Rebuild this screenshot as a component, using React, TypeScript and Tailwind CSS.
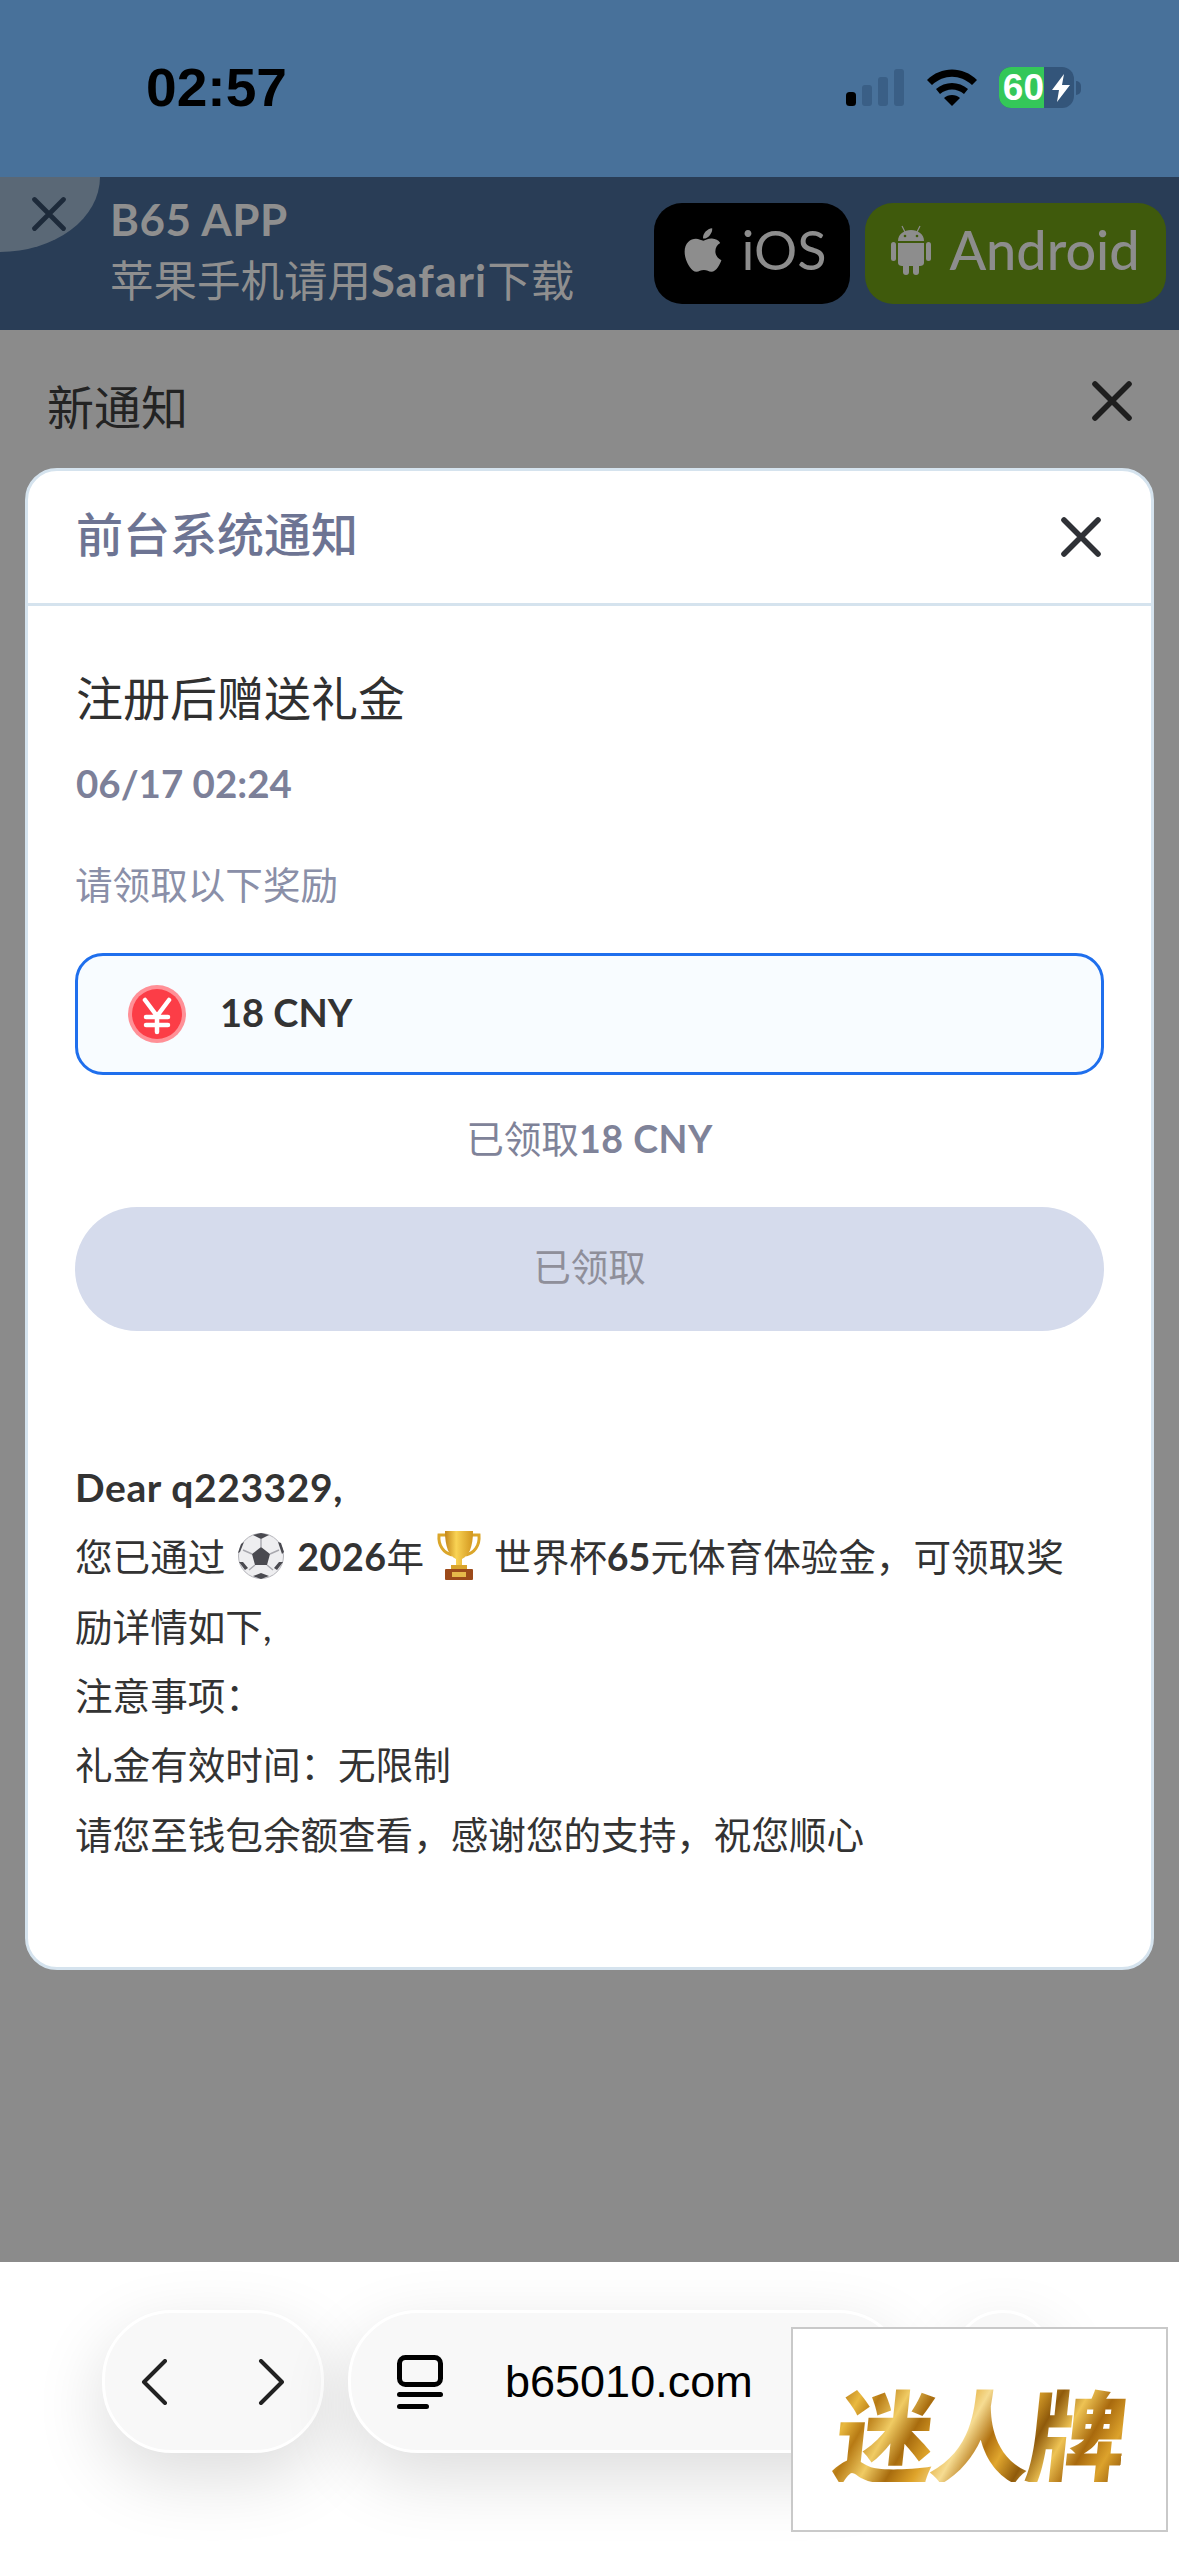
import React from 'react';
import { FaApple } from 'react-icons/fa';

const cjk = "font-['Lato','Noto_Sans_CJK_SC',sans-serif]";

const CloseIcon = ({ size, width, color }: { size: number; width: number; color: string }) => (
  <svg width={size} height={size} viewBox="0 0 40 40" fill="none" stroke={color} strokeWidth={width} strokeLinecap="round">
    <path d="M3 3L37 37M37 3L3 37" />
  </svg>
);

const AndroidRobot = () => (
  <svg width="40" height="50" viewBox="0 0 40 50" fill="#8d8d8d">
    <path d="M11 1L14 7M29 1L26 7" stroke="#8d8d8d" strokeWidth="1.2" fill="none" />
    <path d="M7 16C7 9 13 5 20 5C27 5 33 9 33 16Z" />
    <path d="M7 18H33V38C33 40 31 41 29 41H11C9 41 7 40 7 38Z" />
    <rect x="0" y="17" width="5" height="19" rx="2.5" />
    <rect x="35" y="17" width="5" height="19" rx="2.5" />
    <rect x="12" y="38" width="6" height="12" rx="3" />
    <rect x="22" y="38" width="6" height="12" rx="3" />
    <circle cx="14" cy="11" r="1.3" fill="#3f5a0c" />
    <circle cx="26" cy="11" r="1.3" fill="#3f5a0c" />
  </svg>
);

const SoccerBall = () => (
  <svg width="48" height="48" viewBox="0 0 48 48" className="mx-[12px] inline-block align-[-9px]">
    <circle cx="24" cy="24" r="22.5" fill="#eeeef0" stroke="#b5b5bb" strokeWidth="1" />
    <path d="M24 15L33 22L30 33H18L15 22Z" fill="#4a4a50" />
    <path d="M16 3L24 7L32 3L24 1Z M41 10L45 22L47 20L44 11Z M3 20L7 10L4 12L1 21Z M16 44L24 47L32 44L24 41Z M40 38L46 30L42 30L37 36Z M8 38L2 30L6 30L11 36Z" fill="#4a4a50" />
    <path d="M24 15V7M33 22L42 18M15 22L6 18M30 33L36 38M18 33L12 38" stroke="#a8a8ae" strokeWidth="1.4" />
  </svg>
);

const Trophy = () => (
  <svg width="48" height="52" viewBox="0 0 46 52" className="mx-[11px] inline-block align-[-10px]">
    <defs>
      <linearGradient id="cup" x1="0" x2="1" y1="0" y2="0">
        <stop offset="0" stopColor="#c4861a" />
        <stop offset="0.4" stopColor="#f9d354" />
        <stop offset="1" stopColor="#d2961e" />
      </linearGradient>
    </defs>
    <path d="M11 6H3C2 17 8 24 16 26M35 6H43C44 17 38 24 30 26" fill="none" stroke="#dba62a" strokeWidth="3" />
    <path d="M9 2H37C37 18 33 27 26 30V36H20V30C13 27 9 18 9 2Z" fill="url(#cup)" />
    <rect x="15" y="36" width="16" height="4" fill="#d9a42c" />
    <rect x="9" y="40" width="28" height="11" rx="1" fill="#9c4a1a" />
    <rect x="16" y="43" width="14" height="5" fill="#e5b84a" />
  </svg>
);

const StatusIcons = () => (
  <div className="flex items-center">
    <svg width="58" height="37" viewBox="0 0 58 37">
      <rect x="0" y="23" width="10" height="14" rx="3.5" fill="#000" />
      <rect x="16" y="16" width="10" height="21" rx="3" fill="#3a5f86" />
      <rect x="32" y="8" width="10" height="29" rx="3" fill="#3a5f86" />
      <rect x="48" y="0" width="10" height="37" rx="3" fill="#3a5f86" />
    </svg>
    <svg width="50" height="37" viewBox="0 0 50 37" className="ml-[23px]">
      <path d="M25 37L17 29C21 25 29 25 33 29Z" fill="#000" />
      <path d="M13 25L9 20C18 12 32 12 41 20L37 25C30 19 20 19 13 25Z" fill="#000" />
      <path d="M5 16L0 11C14 -3 36 -3 50 11L45 16C33 5 17 5 5 16Z" fill="#000" />
    </svg>
    <div className="relative ml-[22px] flex h-[41px] w-[75px] overflow-hidden rounded-[12px] bg-[#33557a]">
      <div className="flex h-full w-[45px] items-center justify-end bg-[#34c759]">
        <span className="font-['Liberation_Sans',sans-serif] text-[37px] leading-none font-bold text-white">60</span>
      </div>
      <svg width="18" height="28" viewBox="0 0 18 28" className="mt-[7px] ml-[8px]">
        <path d="M12 0L0 16H7L5 28L18 11H10Z" fill="#fff" />
      </svg>
    </div>
    <div className="ml-[2px] h-[14px] w-[5px] rounded-r-full bg-[#33557a]" />
  </div>
);

const GoldText = () => (
  <span className="-skew-x-6 bg-[linear-gradient(115deg,#a8680c_0%,#e9b93f_8%,#b77a14_14%,#f0cb63_22%,#a86c0e_30%,#dfa42b_38%,#f6dc92_46%,#b0700f_54%,#e0a62e_60%,#8f5a0b_68%,#eec354_76%,#a8690d_84%,#dca22c_92%,#94590a_100%)] bg-clip-text font-['Noto_Sans_CJK_SC',sans-serif] text-[100px] leading-none font-black tracking-[-4px] text-transparent">
    迷人牌
  </span>
);

export default function App() {
  return (
    <div className={`${cjk} flex h-[2556px] w-[1179px] flex-col overflow-hidden bg-[#8b8b8b]`}>
      {/* status bar */}
      <div className="flex h-[177px] items-start justify-between bg-[#48719a] pt-[67px] pr-[98px] pl-[146px]">
        <span className="origin-left scale-x-[1.04] font-['Liberation_Sans',sans-serif] text-[53px] leading-[42px] font-bold text-black">02:57</span>
        <StatusIcons />
      </div>

      {/* app banner */}
      <div className="relative flex h-[153px] items-center justify-between bg-[#293d56] pr-[13px] pl-[110px]">
        <div className="absolute top-0 left-0 flex h-[75px] w-[100px] items-start rounded-br-[100%] bg-[#5a6876] pt-[20px] pl-[32px]">
          <CloseIcon size={34} width={5.6} color="#1d2a3a" />
        </div>
        <div className="-mt-[7px] flex flex-col text-[#8f8f8f]">
          <span className="text-[44px] leading-[52px] font-bold tracking-[0.5px]">B65 APP</span>
          <span className="mt-[8px] text-[43.5px] leading-[54px]">
            苹果手机请用<span className="font-bold tracking-[1px]">Safari</span>下载
          </span>
        </div>
        <div className="flex gap-[15px]">
          <div className="flex h-[101px] w-[196px] items-center justify-center gap-[14px] rounded-[28px] bg-black pb-[6px] text-[#8d8d8d]">
            <FaApple size={50} />
            <span className="text-[54px] leading-none">iOS</span>
          </div>
          <div className="flex h-[101px] w-[301px] items-center justify-center gap-[18px] rounded-[28px] bg-[#3f5a0c] pb-[6px] text-[#8d8d8d]">
            <AndroidRobot />
            <span className="text-[54px] leading-none font-medium">Android</span>
          </div>
        </div>
      </div>

      {/* page heading */}
      <div className="flex h-[138px] items-start justify-between pt-[49px] pr-[47px] pl-[47px]">
        <span className="text-[47px] leading-[56px] text-[#232323]">新通知</span>
        <div className="pt-[2px]">
          <CloseIcon size={40} width={5.6} color="#1e1e1e" />
        </div>
      </div>

      {/* notice modal */}
      <div className="mx-[25px] flex h-[1503px] flex-col rounded-[32px] border-[3px] border-[#d5e3ee] bg-white">
        <div className="flex h-[135px] shrink-0 items-center justify-between border-b-[3px] border-[#d5e3ee] pr-[50px] pl-[48px]">
          <span className="-mt-[4px] text-[47px] leading-none font-medium text-[#6d7493]">前台系统通知</span>
          <CloseIcon size={40} width={5.6} color="#2f3136" />
        </div>
        <div className="flex flex-col px-[47px]">
          <div className="mt-[62px] h-[60px] pl-[1px] text-[47px] leading-[60px] text-[#303030]">注册后赠送礼金</div>
          <div className="mt-[32px] h-[46px] pl-[1px] text-[38.5px] leading-[46px] font-bold text-[#7c8099]">06/17 02:24</div>
          <div className="mt-[56px] h-[46px] text-[37.6px] leading-[46px] text-[#8a8fa8]">请领取以下奖励</div>
          <div className="mt-[45px] flex h-[122px] items-center rounded-[28px] border-[3px] border-[#1f6fed] bg-[#f8fcff] pl-[50px]">
            <svg width="58" height="58" viewBox="0 0 58 58">
              <circle cx="29" cy="29" r="29" fill="#ff9097" />
              <circle cx="29" cy="29" r="25" fill="#fc3d47" />
              <path d="M17 15L29 31L41 15M29 31V47M18 32H40M18 40H40" fill="none" stroke="#fff" strokeWidth="4.5" strokeLinecap="round" strokeLinejoin="round" />
            </svg>
            <span className="-mt-[4px] ml-[34px] text-[38px] leading-none font-bold text-[#333]">18 CNY</span>
          </div>
          <div className="mt-[41px] h-[46px] text-center text-[37.6px] leading-[46px] text-[#7f8399]">
            已领取<span className="font-bold tracking-[0.5px]">18 CNY</span>
          </div>
          <div className="mt-[45px] flex h-[124px] items-center justify-center rounded-full bg-[#d5dbec] pb-[3px] text-[37.6px] text-[#8f8f9a]">已领取</div>
          <div className="mt-[122px] pr-[20px] text-[37.6px] leading-[69.4px] text-[#333]">
            <div className="text-[39px] font-bold tracking-[0.6px]">Dear q223329,</div>
            <div>
              您已通过<SoccerBall /><span className="font-bold tracking-[0.5px]">2026</span>年<Trophy />世界杯<span className="font-bold">65</span>元体育体验金，可领取奖励详情如下,
            </div>
            <div>注意事项：</div>
            <div>礼金有效时间：无限制</div>
            <div>请您至钱包余额查看，感谢您的支持，祝您顺心</div>
          </div>
        </div>
      </div>

      {/* browser toolbar */}
      <div className="relative mt-[292px] flex h-[294px] shrink-0 items-start bg-white pt-[48px] pl-[102px]">
        <div className="flex h-[143px] w-[222px] items-center justify-between rounded-[70px] border-[3px] border-white bg-[#f8f8f8] px-[36px] shadow-[0_24px_70px_rgba(0,0,0,0.14)]">
          <svg width="27" height="46" viewBox="0 0 27 46" fill="none" stroke="#222" strokeWidth="4" strokeLinecap="round" strokeLinejoin="round">
            <path d="M24 2L3 23L24 44" />
          </svg>
          <svg width="27" height="46" viewBox="0 0 27 46" fill="none" stroke="#222" strokeWidth="4" strokeLinecap="round" strokeLinejoin="round">
            <path d="M3 2L24 23L3 44" />
          </svg>
        </div>
        <div className="ml-[24px] flex h-[143px] w-[560px] items-center rounded-[70px] border-[3px] border-white bg-[#f8f8f8] pl-[46px] shadow-[0_24px_70px_rgba(0,0,0,0.14)]">
          <svg width="46" height="54" viewBox="0 0 46 54" fill="none">
            <rect x="2.5" y="2.5" width="41" height="27" rx="6" stroke="#000" strokeWidth="5" />
            <rect x="0" y="37" width="46" height="5" rx="2.5" fill="#000" />
            <rect x="0" y="49" width="32" height="5" rx="2.5" fill="#000" />
          </svg>
          <span className="ml-[62px] font-['Liberation_Sans',sans-serif] text-[45px] leading-none text-black">b65010.com</span>
        </div>
        <div className="ml-[44px] h-[143px] w-[102px] rounded-[70px] border-[3px] border-white bg-[#f8f8f8] shadow-[0_24px_70px_rgba(0,0,0,0.14)]" />

        {/* ad overlay */}
        <div className="absolute top-[65px] left-[791px] flex h-[205px] w-[377px] items-center justify-center border-[2px] border-[#c9c9c9] bg-white pt-[4px]">
          <GoldText />
        </div>
      </div>
    </div>
  );
}
